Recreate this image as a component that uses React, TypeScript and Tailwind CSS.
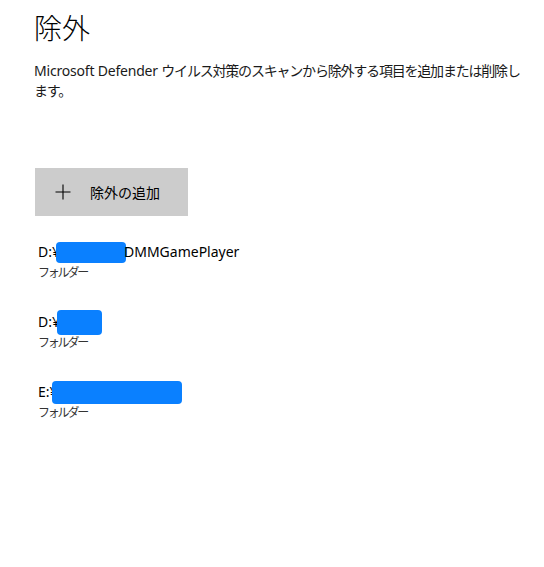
import React from "react";

const font = { fontFamily: '"Noto Sans", "Noto Sans CJK JP", sans-serif' };

function Entry({ prefix, boxW, boxH, boxOffset, suffix }: { prefix: string; boxW: number; boxH: number; boxOffset: number; suffix?: string }) {
  return (
    <div className="h-[70px] pl-[3px]">
      <div className="flex items-center h-[22px] text-[14px] text-black leading-[22px]">
        <span>{prefix}</span>
        <span
          className="inline-block bg-[#0a80ff] rounded-[4px]"
          style={{ width: boxW, height: boxH, marginLeft: boxOffset }}
        />
        {suffix && <span className="ml-[-2px]">{suffix}</span>}
      </div>
      <div className="mt-[2px] text-[12px] leading-[16px] text-[#333333] tracking-[-2.2px]">フォルダー</div>
    </div>
  );
}

export default function App() {
  return (
    <div className="w-[544px] h-[567px] bg-white" style={font}>
      <div className="pl-[35px] pt-[8px]">
        <h1 className="text-[28px] font-light leading-[40px] text-black ml-[-1px]">除外</h1>
        <div className="mt-[13px] ml-[-1px] flex flex-col text-[14px] leading-[20px] text-[#1a1a1a]">
          <p className="whitespace-nowrap">
            <span className="tracking-[-0.2px]">Microsoft Defender </span>
            <span className="tracking-[-1.2px]">ウイルス対策のスキャンから除外する項目を追加または削除し</span>
          </p>
          <p className="tracking-[-1.2px]">ます。</p>
        </div>
        <button className="mt-[67px] flex items-center w-[153px] h-[48px] bg-[#cccccc] pl-[20px] text-[14px] text-black">
          <svg width="16" height="16" viewBox="0 0 16 16" className="mr-[19px]">
            <path d="M8 0.5V15.5M0.5 8H15.5" stroke="#000" strokeWidth="1.1" fill="none" />
          </svg>
          <span>除外の追加</span>
        </button>
        <div className="mt-[25px]">
          <Entry prefix="D:¥" boxW={70} boxH={21} boxOffset={-4} suffix="DMMGamePlayer" />
          <Entry prefix="D:¥" boxW={45} boxH={25} boxOffset={-3} />
          <Entry prefix="E:¥" boxW={130} boxH={23} boxOffset={-6} />
        </div>
      </div>
    </div>
  );
}
